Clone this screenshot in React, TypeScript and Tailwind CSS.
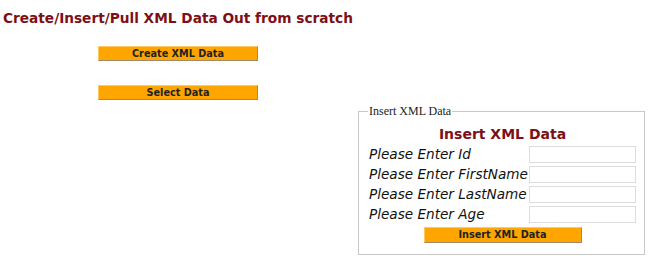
export default function App() {
  const fields = ["Id", "FirstName", "LastName", "Age"];

  return (
    <div className="w-[650px] h-[260px] bg-white overflow-hidden font-['DejaVu_Sans',Verdana,sans-serif]">
      <h1 className="pl-[3px] pt-[10px] text-[13.7px] leading-4 font-bold text-[#7d0f16]">
        Create/Insert/Pull XML Data Out from scratch
      </h1>

      <div className="ml-[98px] mt-[20px] flex flex-col gap-[24px]">
        <button className="w-[160px] h-[15px] bg-[#ffa500] border border-t-[#ffc860] border-l-[#ffc860] border-r-[#a08a6a] border-b-[#a08a6a] text-[9.7px] leading-[13px] font-bold text-[#222]">
          Create XML Data
        </button>
        <button className="w-[160px] h-[15px] bg-[#ffa500] border border-t-[#ffc860] border-l-[#ffc860] border-r-[#a08a6a] border-b-[#a08a6a] text-[9.7px] leading-[13px] font-bold text-[#222]">
          Select Data
        </button>
      </div>

      <div className="flex justify-end pr-[5px] mt-[5px]">
        <fieldset className="w-[287px] border border-[#c8c8c8] pl-[10px] pr-[8px] pb-[11px]">
          <legend className="ml-[-1px] px-[1px] text-[12px] leading-3 text-[#222] font-['Liberation_Serif',serif]">
            Insert XML Data
          </legend>
          <h2 className="pt-[8px] h-[27px] leading-[19px] text-center text-[14px] font-bold text-[#7d0f16]">
            Insert XML Data
          </h2>
          {fields.map((f) => (
            <div key={f} className="flex h-[20px] items-center">
              <span className="w-[160px] text-[13.6px] italic text-[#111] leading-[20px] whitespace-nowrap">
                Please Enter {f}
              </span>
              <input
                type="text"
                className="w-[107px] h-[17px] border border-[#dcdcdc] bg-white"
              />
            </div>
          ))}
          <div className="flex justify-center mt-[3px]">
            <button className="w-[158px] h-[16px] bg-[#ffa500] border border-t-[#ffc860] border-l-[#ffc860] border-r-[#a08a6a] border-b-[#a08a6a] text-[9.7px] leading-[14px] font-bold text-[#222]">
              Insert XML Data
            </button>
          </div>
        </fieldset>
      </div>
    </div>
  );
}
